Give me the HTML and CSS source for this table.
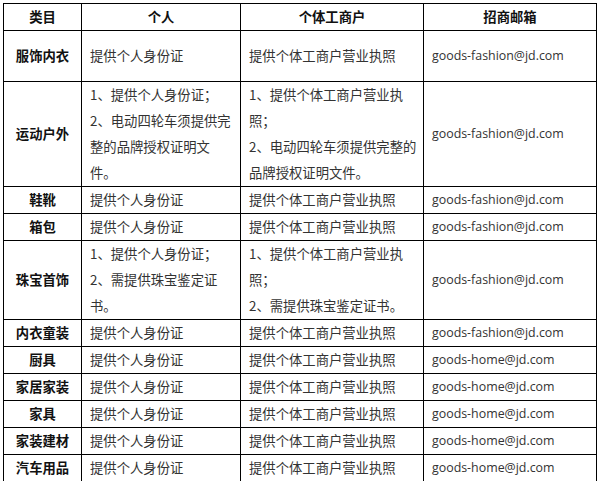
FILE: index.html
```html
<!DOCTYPE html>
<html lang="zh-CN">
<head>
<meta charset="utf-8">
<title>招商类目</title>
<link rel="stylesheet" href="styles.css">
</head>
<body>
<div class="sheet">
  <div class="cell head">类目</div>
  <div class="cell head">个人</div>
  <div class="cell head">个体工商户</div>
  <div class="cell head">招商邮箱</div>

  <div class="cell cat tall">服饰内衣</div>
  <div class="cell">提供个人身份证</div>
  <div class="cell">提供个体工商户营业执照</div>
  <div class="cell mail">goods-fashion@jd.com</div>

  <div class="cell cat">运动户外</div>
  <div class="cell"><div class="txt"><p>1、提供个人身份证；</p><p>2、电动四轮车须提供完整的品牌授权证明文件。</p></div></div>
  <div class="cell"><div class="txt"><p>1、提供个体工商户营业执照；</p><p>2、电动四轮车须提供完整的品牌授权证明文件。</p></div></div>
  <div class="cell mail">goods-fashion@jd.com</div>

  <div class="cell cat">鞋靴</div>
  <div class="cell">提供个人身份证</div>
  <div class="cell">提供个体工商户营业执照</div>
  <div class="cell mail">goods-fashion@jd.com</div>

  <div class="cell cat">箱包</div>
  <div class="cell">提供个人身份证</div>
  <div class="cell">提供个体工商户营业执照</div>
  <div class="cell mail">goods-fashion@jd.com</div>

  <div class="cell cat">珠宝首饰</div>
  <div class="cell"><div class="txt"><p>1、提供个人身份证；</p><p>2、需提供珠宝鉴定证书。</p></div></div>
  <div class="cell"><div class="txt"><p>1、提供个体工商户营业执照；</p><p>2、需提供珠宝鉴定证书。</p></div></div>
  <div class="cell mail">goods-fashion@jd.com</div>

  <div class="cell cat">内衣童装</div>
  <div class="cell">提供个人身份证</div>
  <div class="cell">提供个体工商户营业执照</div>
  <div class="cell mail">goods-fashion@jd.com</div>

  <div class="cell cat">厨具</div>
  <div class="cell">提供个人身份证</div>
  <div class="cell">提供个体工商户营业执照</div>
  <div class="cell mail">goods-home@jd.com</div>

  <div class="cell cat">家居家装</div>
  <div class="cell">提供个人身份证</div>
  <div class="cell">提供个体工商户营业执照</div>
  <div class="cell mail">goods-home@jd.com</div>

  <div class="cell cat">家具</div>
  <div class="cell">提供个人身份证</div>
  <div class="cell">提供个体工商户营业执照</div>
  <div class="cell mail">goods-home@jd.com</div>

  <div class="cell cat">家装建材</div>
  <div class="cell">提供个人身份证</div>
  <div class="cell">提供个体工商户营业执照</div>
  <div class="cell mail">goods-home@jd.com</div>

  <div class="cell cat">汽车用品</div>
  <div class="cell">提供个人身份证</div>
  <div class="cell">提供个体工商户营业执照</div>
  <div class="cell mail">goods-home@jd.com</div>
</div>
</body>
</html>
```
FILE: styles.css
```css
html, body {
  margin: 0;
  padding: 0;
  background: #fff;
}
body {
  padding: 3px 0 0 3px;
  font-family: "Noto Sans CJK SC", "Noto Sans", sans-serif;
  font-size: 13.333px;
  line-height: 26px;
  color: #333;
}
.sheet {
  display: grid;
  grid-template-columns: 78px 159px 183px 173px;
  width: 594px;
  border-top: 1px solid #000;
  border-left: 1px solid #000;
  box-sizing: border-box;
}
.cell {
  box-sizing: border-box;
  border-right: 1px solid #000;
  border-bottom: 1px solid #000;
  padding: 0 5px 0 8px;
  min-height: 27px;
  display: flex;
  align-items: center;
  white-space: normal;
}
.txt p {
  margin: 0;
}
.head,
.cat {
  justify-content: center;
  text-align: center;
  font-weight: bold;
  color: #111;
  padding: 0 4px;
}
.tall {
  min-height: 51px;
}
.mail {
  font-family: "Open Sans", "Noto Sans CJK SC", sans-serif;
  font-size: 12.4px;
  color: #333;
}
```
